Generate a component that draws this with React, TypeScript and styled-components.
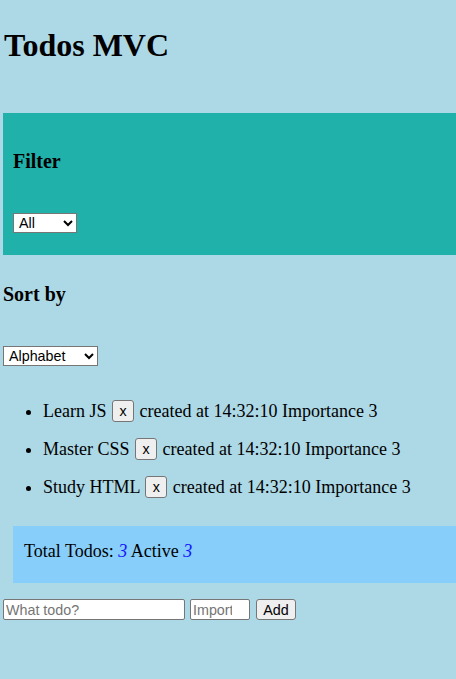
import React, { useState } from "react";
import styled, { createGlobalStyle } from "styled-components";

const GlobalStyle = createGlobalStyle`
  html, body {
    margin: 0;
    padding: 0;
    background: #add8e6;
    overflow-x: hidden;
  }
  body {
    font-family: "Liberation Serif", "Times New Roman", serif;
    color: #000;
  }
`;

const controlFont = `
  font-family: "Liberation Sans", Arial, sans-serif;
  font-size: 14.3px;
`;

const Page = styled.div`
  display: flex;
  flex-direction: column;
  padding-left: 3px;
  min-height: 679px;
  box-sizing: border-box;
`;

const Title = styled.h1`
  margin: 25px 0 0 1px;
  font-size: 32px;
  line-height: 40px;
  font-weight: bold;
`;

const FilterPanel = styled.section`
  margin-top: 48px;
  padding: 10px;
  background: #20b2aa;
  display: flex;
  flex-direction: column;
  align-items: flex-start;
`;

const SectionTitle = styled.h3<{ $top: number }>`
  margin: ${(p) => p.$top}px 0 0 0;
  font-size: 20px;
  line-height: 26px;
  font-weight: bold;
`;

const Select = styled.select<{ $w: number; $bottom?: number }>`
  margin-top: 39px;
  margin-bottom: ${(p) => p.$bottom ?? 0}px;
  align-self: flex-start;
  width: ${(p) => p.$w}px;
  height: 20px;
  ${controlFont}
  background: #fff;
  color: #000;
  border: 1px solid #767676;
  border-radius: 0;
  padding: 0 0 0 1px;
`;

const TodoList = styled.ul`
  margin: 34px 0 28px 0;
  padding-left: 40px;
`;

const TodoItem = styled.li`
  font-size: 18px;
  line-height: 22px;
  margin-bottom: 16px;
  &:last-child {
    margin-bottom: 0;
  }
`;

const RemoveButton = styled.button`
  ${controlFont}
  width: 22px;
  height: 22px;
  padding: 0;
  margin: 0 1px;
  background: #efefef;
  border: 1px solid #767676;
  border-radius: 3px;
  color: #000;
  vertical-align: 1px;
`;

const TotalBox = styled.div`
  margin-left: 10px;
  padding: 15px 10px 21px 11px;
  background: #87cefa;
  font-size: 18px;
  line-height: 21px;
`;

const Count = styled.em`
  color: #1414ff;
`;

const AddForm = styled.form`
  margin-top: 16px;
  display: flex;
  align-items: center;
  gap: 5px;
`;

const Field = styled.input<{ $w: number }>`
  width: ${(p) => p.$w}px;
  height: 21px;
  box-sizing: border-box;
  ${controlFont}
  padding: 1px 2px;
  border: 1px solid #767676;
  border-radius: 2px;
  background: #fff;
  &::placeholder {
    color: #757575;
  }
`;

const AddButton = styled.button`
  margin-left: 1px;
  width: 40px;
  height: 21px;
  ${controlFont}
  padding: 0;
  background: #efefef;
  border: 1px solid #767676;
  border-radius: 3px;
  color: #000;
`;

const todos = [
  { id: 1, text: "Learn JS", time: "14:32:10", importance: 3 },
  { id: 2, text: "Master CSS", time: "14:32:10", importance: 3 },
  { id: 3, text: "Study HTML", time: "14:32:10", importance: 3 },
];

export default function App() {
  const [filter, setFilter] = useState("all");
  const [sort, setSort] = useState("alphabet");
  return (
    <>
      <GlobalStyle />
      <Page>
        <Title>Todos MVC</Title>
        <FilterPanel>
          <SectionTitle $top={25}>Filter</SectionTitle>
          <Select $w={64} $bottom={12} value={filter} onChange={(e) => setFilter(e.target.value)}>
            <option value="all">All</option>
            <option value="active">Active</option>
            <option value="done">Done</option>
          </Select>
        </FilterPanel>
        <SectionTitle $top={26}>Sort by</SectionTitle>
        <Select $w={95} value={sort} onChange={(e) => setSort(e.target.value)}>
          <option value="alphabet">Alphabet</option>
          <option value="date">Date</option>
          <option value="importance">Importance</option>
        </Select>
        <TodoList>
          {todos.map((t) => (
            <TodoItem key={t.id}>
              {t.text} <RemoveButton type="button">x</RemoveButton> created at {t.time} Importance {t.importance}
            </TodoItem>
          ))}
        </TodoList>
        <TotalBox>
          Total Todos: <Count>3</Count> Active <Count>3</Count>
        </TotalBox>
        <AddForm onSubmit={(e) => e.preventDefault()}>
          <Field $w={182} type="text" placeholder="What todo?" />
          <Field $w={60} type="number" placeholder="Importance" />
          <AddButton type="submit">Add</AddButton>
        </AddForm>
      </Page>
    </>
  );
}
